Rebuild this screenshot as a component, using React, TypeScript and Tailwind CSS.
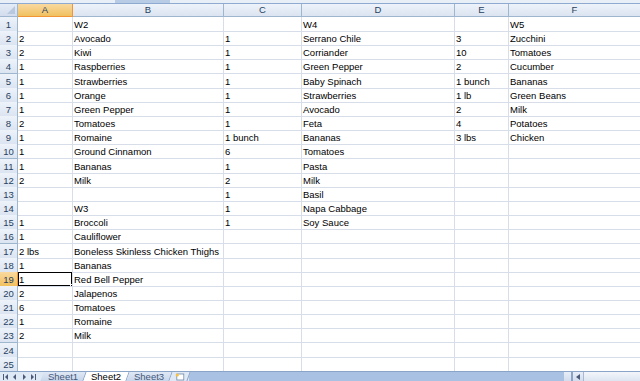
import React from "react";

const cols = ["A", "B", "C", "D", "E", "F"];

// [A, B, C, D, E, F]
const data: string[][] = [
  ["", "W2", "", "W4", "", "W5"],
  ["2", "Avocado", "1", "Serrano Chile", "3", "Zucchini"],
  ["2", "Kiwi", "1", "Corriander", "10", "Tomatoes"],
  ["1", "Raspberries", "1", "Green Pepper", "2", "Cucumber"],
  ["1", "Strawberries", "1", "Baby Spinach", "1 bunch", "Bananas"],
  ["1", "Orange", "1", "Strawberries", "1 lb", "Green Beans"],
  ["1", "Green Pepper", "1", "Avocado", "2", "Milk"],
  ["2", "Tomatoes", "1", "Feta", "4", "Potatoes"],
  ["1", "Romaine", "1 bunch", "Bananas", "3 lbs", "Chicken"],
  ["1", "Ground Cinnamon", "6", "Tomatoes", "", ""],
  ["1", "Bananas", "1", "Pasta", "", ""],
  ["2", "Milk", "2", "Milk", "", ""],
  ["", "", "1", "Basil", "", ""],
  ["", "W3", "1", "Napa Cabbage", "", ""],
  ["1", "Broccoli", "1", "Soy Sauce", "", ""],
  ["1", "Cauliflower", "", "", "", ""],
  ["2 lbs", "Boneless Skinless Chicken Thighs", "", "", "", ""],
  ["1", "Bananas", "", "", "", ""],
  ["1", "Red Bell Pepper", "", "", "", ""],
  ["2", "Jalapenos", "", "", "", ""],
  ["6", "Tomatoes", "", "", "", ""],
  ["1", "Romaine", "", "", "", ""],
  ["2", "Milk", "", "", "", ""],
  ["", "", "", "", "", ""],
  ["", "", "", "", "", ""],
];

const gridCols = "grid grid-cols-[18px_55px_151px_78px_153px_54px_132px]";

function NavArrows() {
  return (
    <svg width="40" height="10" viewBox="0 0 40 10" className="shrink-0">
      <rect x="3" y="2" width="1" height="6" fill="#4a5a78" />
      <path d="M8 2 L5 5 L8 8 Z" fill="#4a5a78" />
      <path d="M16 2 L13 5 L16 8 Z" fill="#4a5a78" />
      <path d="M23 2 L26 5 L23 8 Z" fill="#4a5a78" />
      <path d="M31 2 L34 5 L31 8 Z" fill="#4a5a78" />
      <rect x="35" y="2" width="1" height="6" fill="#4a5a78" />
    </svg>
  );
}

const App: React.FC = () => {
  return (
    <div className="w-[640px] h-[381px] overflow-hidden bg-white flex flex-col font-['Liberation_Sans',Arial,sans-serif]">
      {/* top strip */}
      <div className="h-[4px] shrink-0 bg-[#e9eff7] border-b border-[#8eaad0] flex">
        <div className="ml-[115px] w-[55px] bg-[#b9cce6]" />
      </div>

      {/* column headers */}
      <div className={`${gridCols} h-[13px] shrink-0 text-[9.5px] text-[#27415f] leading-[12px]`}>
        <div className="bg-gradient-to-b from-[#e4ecf7] to-[#d3dced] border-r border-b border-[#9eb6ce] relative">
          <div className="absolute right-[2px] bottom-[2px] w-0 h-0 border-l-[8px] border-l-transparent border-b-[8px] border-b-[#b8c8de]" />
        </div>
        {cols.map((c) => (
          <div
            key={c}
            className={
              c === "A"
                ? "bg-gradient-to-b from-[#f9d99f] to-[#f1c15f] border-r border-b border-[#f29536] text-center"
                : "bg-gradient-to-b from-[#eef3fa] to-[#dbe4f1] border-r border-b border-[#9eb6ce] text-center"
            }
          >
            {c}
          </div>
        ))}
      </div>

      {/* rows */}
      <div className="flex-1 overflow-hidden">
        {data.map((row, i) => {
          const n = i + 1;
          const active = n === 19;
          return (
            <div key={n} className={`${gridCols} h-[14.16px] text-[9.5px] leading-[13px]`}>
              <div
                className={
                  active
                    ? "bg-gradient-to-b from-[#f9d99f] to-[#f1c15f] border-r border-b border-[#f29536] text-center pt-[1px] text-[#27415f]"
                    : "bg-gradient-to-b from-[#eef3fa] to-[#dbe4f1] border-r border-b border-[#9eb6ce] text-center pt-[1px] text-[#27415f]"
                }
              >
                {n}
              </div>
              {row.map((v, j) => (
                <div
                  key={j}
                  className={`relative border-r border-b border-[#d7dee9] pl-[1px] pt-[1px] whitespace-nowrap text-black ${j === 1 ? "overflow-visible z-10" : "overflow-hidden"}`}
                >
                  {v}
                  {active && j === 0 && (
                    <div className="absolute -left-[1px] -top-[1px] -right-[1px] -bottom-[1px] border-2 border-black">
                      <div className="absolute -right-[3px] -bottom-[3px] w-[4px] h-[4px] bg-black border border-white" />
                    </div>
                  )}
                </div>
              ))}
            </div>
          );
        })}
      </div>

      {/* sheet tabs bar */}
      <div className="h-[10px] shrink-0 flex items-stretch bg-[#a9c1e2] border-t border-[#8aa4c8] text-[9.5px] leading-[9px]">
        <div className="flex items-center bg-[#dfe8f5] w-[42px]">
          <NavArrows />
        </div>
        <div className="flex items-stretch bg-[#dfe8f5]">
          <div className="px-[6px] text-[#44587a] bg-gradient-to-b from-[#dfe8f5] to-[#c8d6ea] border-r border-[#8aa4c8] skew-x-[-20deg]">
            <span className="inline-block skew-x-[20deg]">Sheet1</span>
          </div>
          <div className="px-[6px] text-black bg-white border-r border-[#8aa4c8] skew-x-[-20deg]">
            <span className="inline-block skew-x-[20deg]">Sheet2</span>
          </div>
          <div className="px-[6px] text-[#44587a] bg-gradient-to-b from-[#dfe8f5] to-[#c8d6ea] border-r border-[#8aa4c8] skew-x-[-20deg]">
            <span className="inline-block skew-x-[20deg]">Sheet3</span>
          </div>
          <div className="w-[18px] flex items-center justify-center bg-[#dfe8f5] border-r border-[#8aa4c8] skew-x-[-20deg]">
            <svg width="10" height="8" viewBox="0 0 10 8" className="skew-x-[20deg]">
              <rect x="2" y="1" width="7" height="6" fill="#fff" stroke="#6f86a8" strokeWidth="0.8" />
              <circle cx="2.5" cy="2" r="1.6" fill="#f6c244" />
            </svg>
          </div>
        </div>
        <div className="flex-1" />
        <div className="flex items-stretch w-[76px] bg-gradient-to-b from-[#e8eef7] to-[#d2dced]">
          <div className="w-[2px] ml-[7px] bg-white border-x border-[#8aa4c8]" />
          <div className="w-[9px] flex items-center justify-center">
            <svg width="4" height="6" viewBox="0 0 4 6">
              <path d="M4 0 L0 3 L4 6 Z" fill="#4a5a78" />
            </svg>
          </div>
          <div className="flex-1 ml-[1px] bg-gradient-to-b from-[#f3f6fb] to-[#dde5f1] border-l border-[#a8b9d3]" />
        </div>
      </div>
    </div>
  );
};

export default App;
